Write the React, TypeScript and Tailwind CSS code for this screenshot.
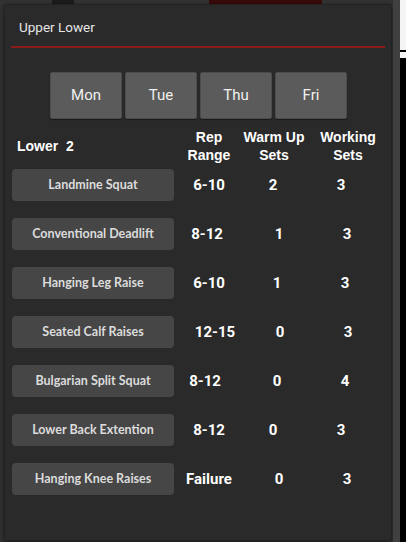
import React from 'react'

const days = ['Mon', 'Tue', 'Thu', 'Fri']

// rep / warm up / working, with small nudges as in the original app
const exercises = [
  { name: 'Landmine Squat', rep: '6-10', warm: '2', work: '3', rx: 'ml-0', wx: '-ml-[8px]', kx: '-ml-[8px]' },
  { name: 'Conventional Deadlift', rep: '8-12', warm: '1', work: '3', rx: '-ml-[4px]', wx: 'ml-[4px]', kx: 'ml-[4px]' },
  { name: 'Hanging Leg Raise', rep: '6-10', warm: '1', work: '3', rx: 'ml-0', wx: 'ml-0', kx: 'ml-0' },
  { name: 'Seated Calf Raises', rep: '12-15', warm: '0', work: '3', rx: 'ml-[12px]', wx: 'ml-[6px]', kx: 'ml-[6px]' },
  { name: 'Bulgarian Split Squat', rep: '8-12', warm: '0', work: '4', rx: '-ml-[8px]', wx: 'ml-0', kx: 'ml-0' },
  { name: 'Lower Back Extention', rep: '8-12', warm: '0', work: '3', rx: 'ml-0', wx: '-ml-[8px]', kx: '-ml-[8px]' },
  { name: 'Hanging Knee Raises', rep: 'Failure', warm: '0', work: '3', rx: 'ml-0', wx: 'ml-[4px]', kx: 'ml-[4px]' },
]

export default function App() {
  return (
    <div className="flex h-[542px] w-[406px] overflow-hidden bg-[#333333]">
      <div className="flex flex-col pl-[4px]">
        {/* bit of the page peeking above the dialog */}
        <div className="flex h-[4px] w-[388px]">
          <div className="ml-[48px] w-[22px] bg-[#1c1c1c]" />
          <div className="ml-[135px] w-[113px] bg-[#3a0a0a]" />
        </div>

        {/* Dialog */}
        <div className="flex h-[537px] w-[388px] flex-col rounded-[2px] border border-[#232323] bg-[#2a2a2a] shadow-[0_2px_6px_rgba(0,0,0,0.5)]">
          <div className="px-[14px] pt-[14px] font-['Roboto',sans-serif] text-[13.5px] leading-[16px] text-[#e6e6e6]">
            Upper Lower
          </div>
          <div className="mx-[6px] mt-[11px] h-[2px] bg-[#8c1c1c]" />

          <div className="mt-[24px] flex gap-[3px] pl-[45px]">
            {days.map((d) => (
              <button
                key={d}
                className="h-[47px] w-[72px] rounded-[2px] border border-[#4c4c4c] bg-[#5b5b5b] font-['Roboto',sans-serif] text-[15px] text-[#f0f0f0] shadow-[0_1px_1px_rgba(0,0,0,0.4)]"
              >
                {d}
              </button>
            ))}
          </div>

          {/* Header row */}
          <div className="mt-[9px] flex items-center font-['Liberation_Sans',Arial,sans-serif] text-[14px] font-bold leading-[18px] text-white">
            <div className="w-[173px] pl-[12px]">Lower&nbsp;&nbsp;2</div>
            <div className="w-[62px] text-center">Rep<br />Range</div>
            <div className="ml-[3px] w-[62px] text-center">Warm Up<br />Sets</div>
            <div className="ml-[12px] w-[62px] text-center">Working<br />Sets</div>
          </div>

          <div className="mt-[5px] flex flex-col gap-[17px]">
            {exercises.map((e) => (
              <div key={e.name} className="flex items-center">
                <button className="ml-[7px] h-[32px] w-[162px] rounded-[4px] bg-[#464646] font-['Lato',sans-serif] text-[12.5px] font-bold text-[#dcdcdc]">
                  {e.name}
                </button>
                <div className="ml-[4px] flex w-[62px] justify-center font-['Roboto',sans-serif] text-[15px] font-bold text-white">
                  <span className={e.rx}>{e.rep}</span>
                </div>
                <div className="ml-[6px] flex w-[62px] justify-center font-['Roboto',sans-serif] text-[15px] font-bold text-white">
                  <span className={e.wx}>{e.warm}</span>
                </div>
                <div className="ml-[6px] flex w-[62px] justify-center font-['Roboto',sans-serif] text-[15px] font-bold text-white">
                  <span className={e.kx}>{e.work}</span>
                </div>
              </div>
            ))}
          </div>
        </div>
      </div>

      {/* right edge of the page behind */}
      <div className="ml-[1px] w-[7px] bg-[#404040]" />
      <div className="flex w-[6px] flex-col">
        <div className="h-[50px] bg-[#f4f4f4]" />
        <div className="h-[2px] bg-black" />
        <div className="h-[6px] bg-[#f4f4f4]" />
        <div className="flex-1 bg-black" />
      </div>
    </div>
  )
}
